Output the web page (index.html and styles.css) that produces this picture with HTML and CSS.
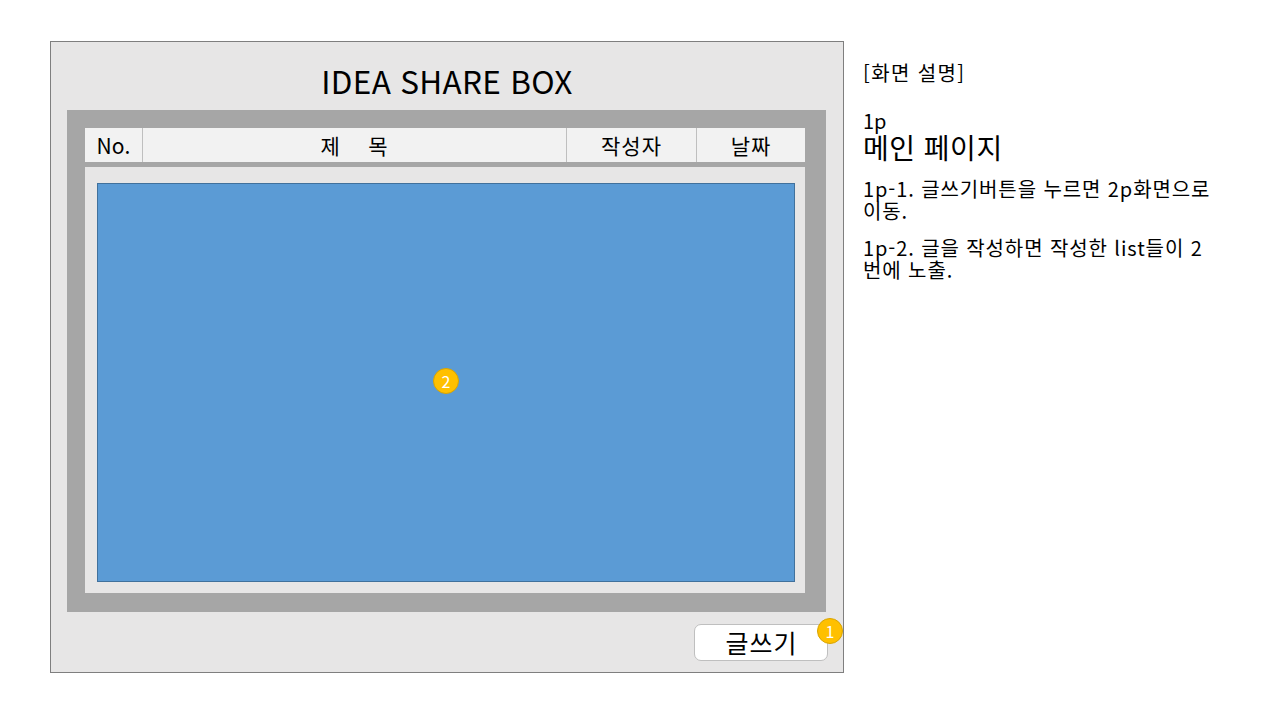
FILE: index.html
```html
<!DOCTYPE html>
<html lang="ko">
<head>
<meta charset="utf-8">
<title>IDEA SHARE BOX</title>
<link rel="stylesheet" href="styles.css">
</head>
<body>
<div class="slide">
  <div class="screen">
    <h1 class="title">IDEA SHARE BOX</h1>
    <div class="frame">
      <div class="thead">
        <div class="col col-no">No.</div>
        <div class="col col-title">제    목</div>
        <div class="col col-author">작성자</div>
        <div class="col col-date">날짜</div>
      </div>
      <div class="list-panel">
        <div class="list-area">
          <span class="badge badge-center">2</span>
        </div>
      </div>
    </div>
    <div class="actions">
      <button class="write-btn">글쓰기<span class="badge badge-btn">1</span></button>
    </div>
  </div>
  <div class="notes">
    <p class="notes-head">[화면 설명]</p>
    <p class="page-no">1p</p>
    <p class="page-name">메인 페이지</p>
    <p class="note note-first">1p-1. 글쓰기버튼을 누르면 2p화면으로<br>이동.</p>
    <p class="note note-second">1p-2. 글을 작성하면 작성한 list들이 2<br>번에 노출.</p>
  </div>
</div>
</body>
</html>
```
FILE: styles.css
```css
* { box-sizing: border-box; }
html, body { margin: 0; padding: 0; background: #ffffff; }
body {
  width: 1280px;
  height: 720px;
  overflow: hidden;
  font-family: "Noto Sans CJK KR", "Noto Sans", sans-serif;
  color: #000;
}
.slide {
  display: flex;
  align-items: flex-start;
  padding: 41px 0 0 50px;
}
.screen {
  width: 794px;
  height: 632px;
  background: #e7e6e6;
  border: 1px solid #7f7f7f;
  display: flex;
  flex-direction: column;
}
.title {
  margin: 0;
  height: 68px;
  display: flex;
  align-items: center;
  justify-content: center;
  padding-top: 7px;
  font-size: 31.5px;
  font-weight: 400;
  letter-spacing: 0.3px;
}
.frame {
  margin-left: 16px;
  width: 759px;
  height: 502px;
  background: #a6a6a6;
  padding: 18px 21px 19px 18px;
  display: flex;
  flex-direction: column;
}
.thead {
  display: flex;
  height: 34px;
  background: #f2f2f2;
  flex: none;
}
.col {
  display: flex;
  align-items: center;
  justify-content: center;
  font-size: 21px;
  letter-spacing: 1px;
  border-left: 1px solid #bfbfbf;
  white-space: pre;
}
.col-no { width: 57px; border-left: none; letter-spacing: 0; }
.col-title { width: 424px; }
.col-author { width: 130px; }
.col-date { flex: 1; }
.list-panel {
  margin-top: 5px;
  flex: 1;
  background: #e7e6e6;
  padding: 16px 10px 11px 12px;
  display: flex;
}
.list-area {
  flex: 1;
  background: #5b9bd5;
  border: 1px solid #41719c;
  position: relative;
}
.badge {
  position: absolute;
  width: 26px;
  height: 26px;
  border-radius: 50%;
  background: #ffc000;
  border: 1px solid #d9a400;
  color: #ffffff;
  font-size: 16px;
  line-height: 24px;
  letter-spacing: 0;
  text-align: center;
  font-family: "Noto Sans CJK KR", "Noto Sans", sans-serif;
}
.badge-center { left: 335px; top: 184px; }
.actions {
  display: flex;
  justify-content: flex-end;
  padding: 12px 15px 0 0;
}
.write-btn {
  position: relative;
  width: 134px;
  height: 37px;
  background: #ffffff;
  border: 1px solid #bfbfbf;
  border-radius: 7px;
  font-family: "Noto Sans CJK KR", "Noto Sans", sans-serif;
  font-size: 25px;
  letter-spacing: 1px;
  line-height: 33px;
  padding: 0 0 0 1px;
  color: #000;
}
.badge-btn { left: 122px; top: -7px; }
.notes {
  margin-left: 19px;
  padding-top: 19px;
  width: 400px;
}
.notes .notes-head { margin: 0; font-size: 20px; line-height: 26px; letter-spacing: 1.4px; }
.notes .page-no { margin: 25px 0 0; font-size: 20px; line-height: 20px; }
.notes .page-name { margin: 1px 0 0; font-size: 28px; line-height: 30px; letter-spacing: 0.5px; }
.notes .note { font-size: 20px; line-height: 22px; letter-spacing: 0.9px; }
.notes .note-first { margin: 16px 0 0; }
.notes .note-second { margin: 15px 0 0; }
```
